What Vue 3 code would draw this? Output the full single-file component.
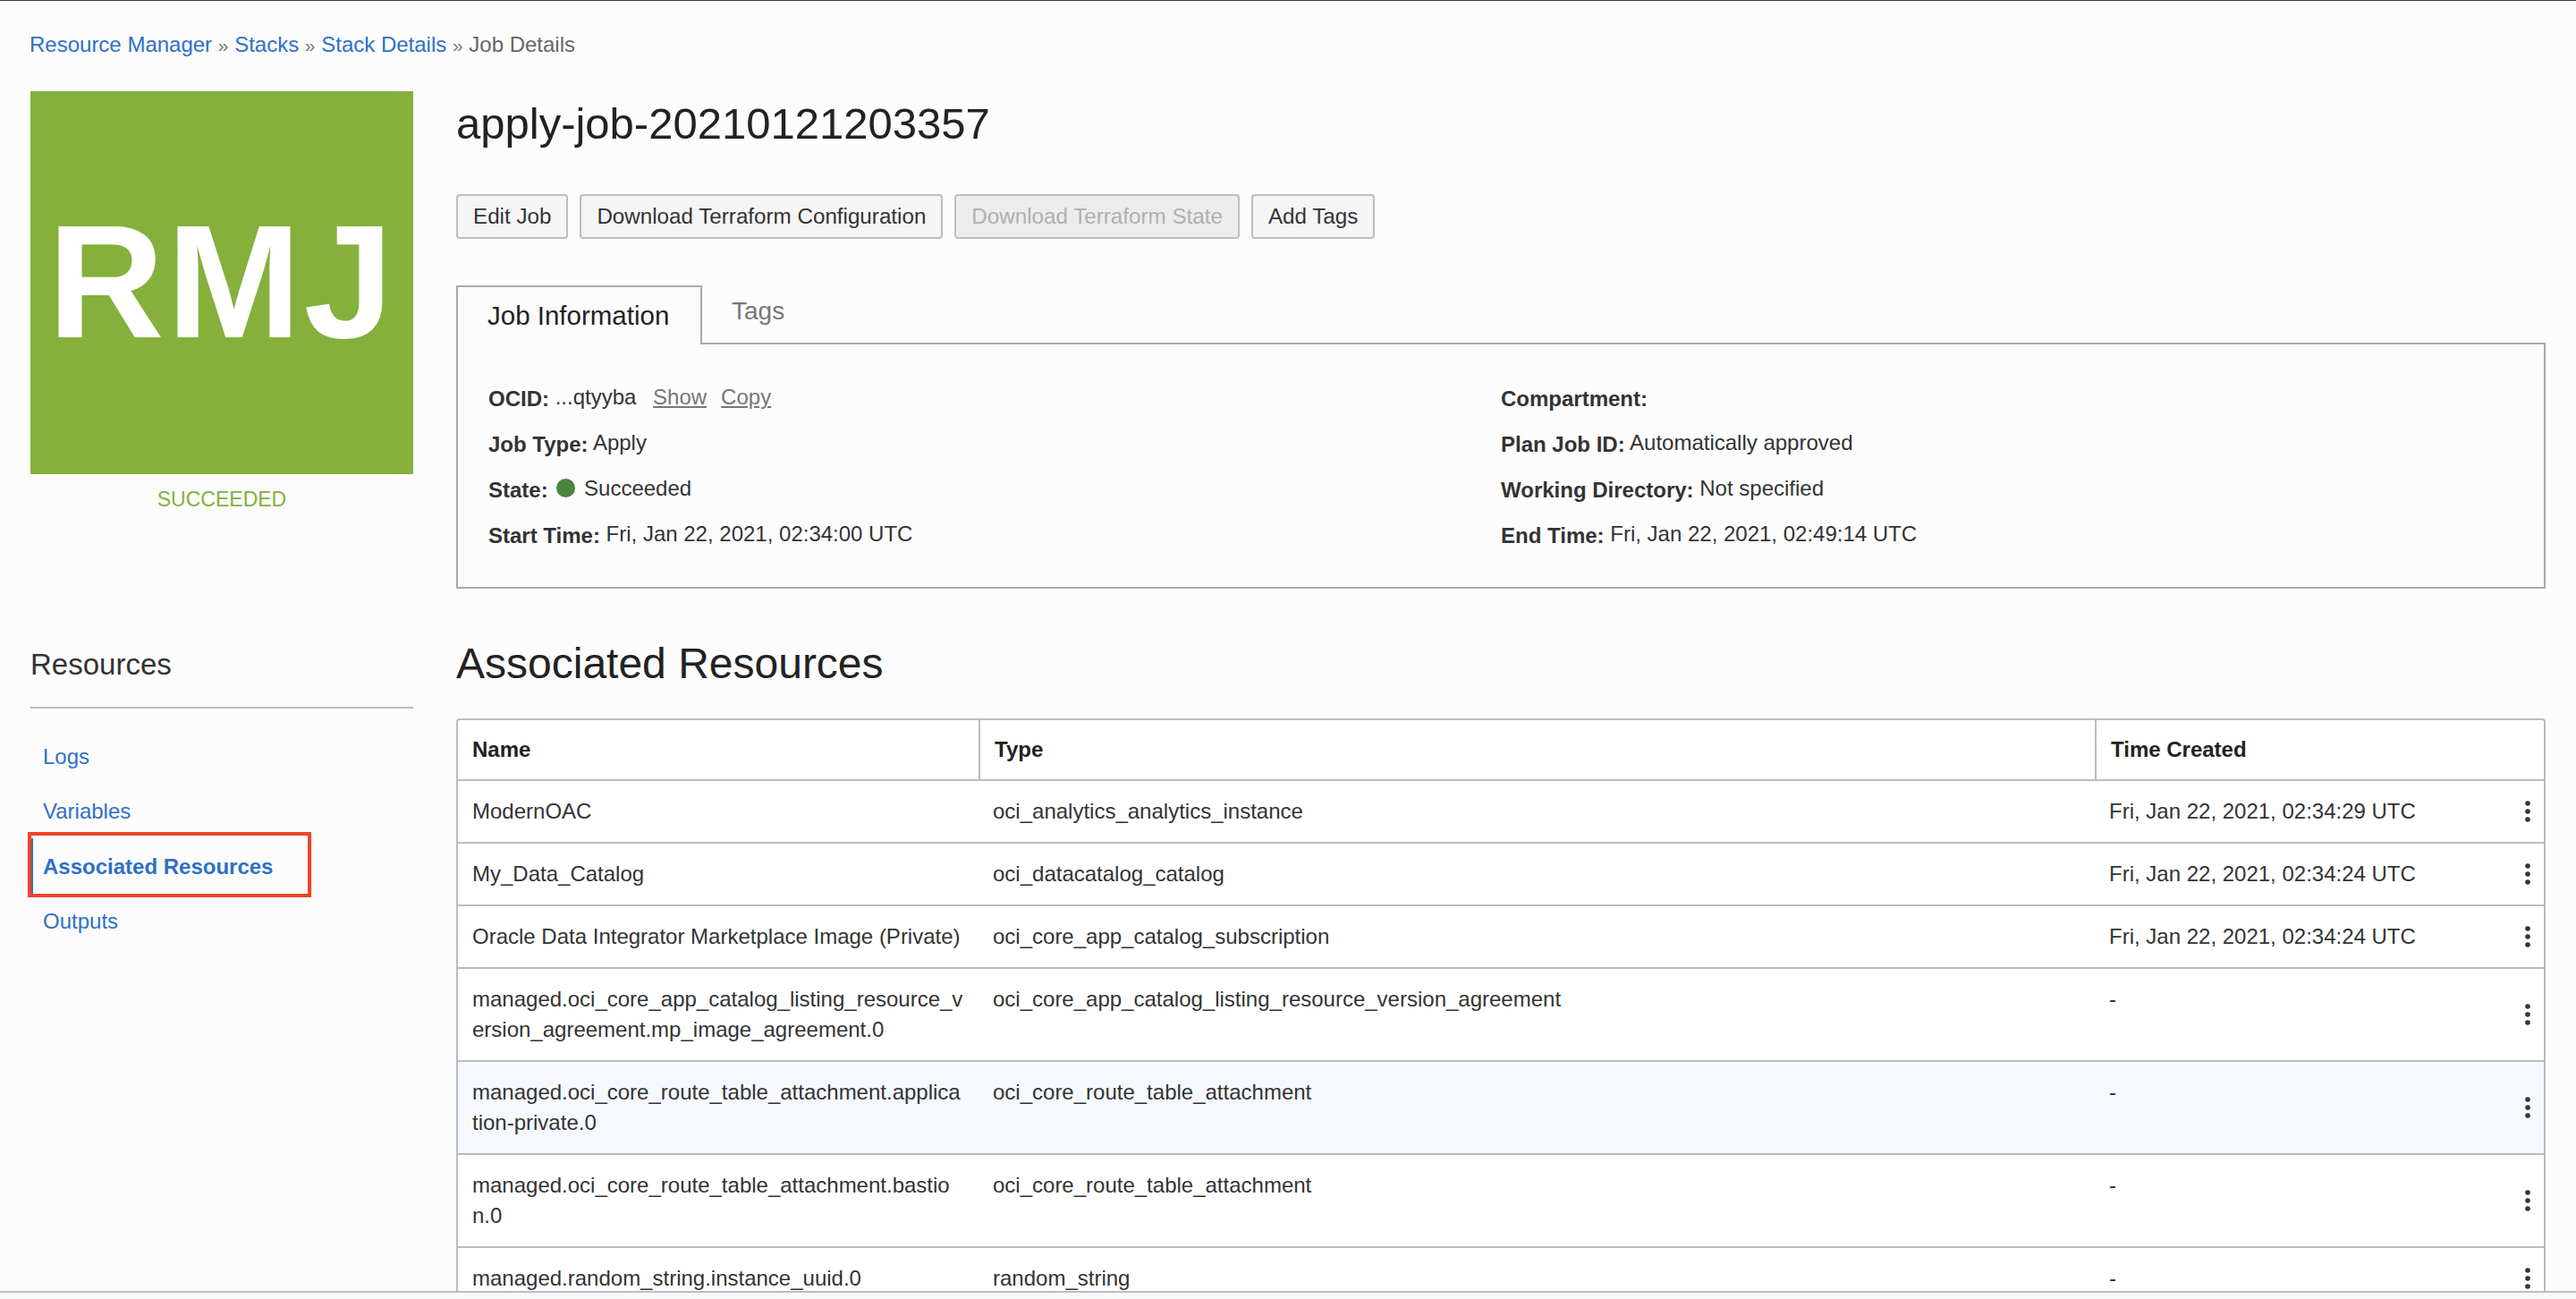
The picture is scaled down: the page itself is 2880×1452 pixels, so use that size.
<template>
  <div class="page">
    <div class="crumbs">
      <a>Resource Manager</a> <span class="sep">»</span> <a>Stacks</a> <span class="sep">»</span> <a>Stack Details</a> <span class="sep">»</span> <span class="current">Job Details</span>
    </div>

    <div class="layout">
      <aside class="side">
        <div class="logo">RMJ</div>
        <div class="status">SUCCEEDED</div>
        <h3 class="res-title">Resources</h3>
        <nav class="res-nav">
          <a v-for="item in navItems" :key="item" :class="{ active: item === 'Associated Resources' }">{{ item }}</a>
        </nav>
      </aside>

      <main class="content">
        <h1 class="job-title">apply-job-20210121203357</h1>
        <div class="actions">
          <button>Edit Job</button>
          <button>Download Terraform Configuration</button>
          <button class="disabled">Download Terraform State</button>
          <button>Add Tags</button>
        </div>

        <div class="tabs">
          <div class="tab selected">Job Information</div>
          <div class="tab">Tags</div>
        </div>
        <div class="info">
          <div class="info-col">
            <div class="line"><b>OCID:</b> ...qtyyba <u class="lnk first">Show</u><u class="lnk">Copy</u></div>
            <div class="line"><b>Job Type:</b> Apply</div>
            <div class="line"><b>State:</b> <i class="dot"></i> Succeeded</div>
            <div class="line"><b>Start Time:</b> Fri, Jan 22, 2021, 02:34:00 UTC</div>
          </div>
          <div class="info-col">
            <div class="line"><b>Compartment:</b></div>
            <div class="line"><b>Plan Job ID:</b> Automatically approved</div>
            <div class="line"><b>Working Directory:</b> Not specified</div>
            <div class="line"><b>End Time:</b> Fri, Jan 22, 2021, 02:49:14 UTC</div>
          </div>
        </div>

        <h2 class="sec-title">Associated Resources</h2>
        <div class="table">
          <div class="row head">
            <div class="cell">Name</div>
            <div class="cell">Type</div>
            <div class="cell">Time Created</div>
          </div>
          <div v-for="r in rows" :key="r.name" class="row" :class="{ hover: r.hover }">
            <div class="cell">{{ r.name }}</div>
            <div class="cell">{{ r.type }}</div>
            <div class="cell">{{ r.time }}</div>
            <svg class="kebab" width="8" height="24" viewBox="0 0 8 24">
              <circle cx="4" cy="3" r="2.8" />
              <circle cx="4" cy="12" r="2.8" />
              <circle cx="4" cy="21" r="2.8" />
            </svg>
          </div>
        </div>
      </main>
    </div>
  </div>
</template>

<script setup>
const navItems = ['Logs', 'Variables', 'Associated Resources', 'Outputs']

const rows = [
  { name: 'ModernOAC', type: 'oci_analytics_analytics_instance', time: 'Fri, Jan 22, 2021, 02:34:29 UTC' },
  { name: 'My_Data_Catalog', type: 'oci_datacatalog_catalog', time: 'Fri, Jan 22, 2021, 02:34:24 UTC' },
  { name: 'Oracle Data Integrator Marketplace Image (Private)', type: 'oci_core_app_catalog_subscription', time: 'Fri, Jan 22, 2021, 02:34:24 UTC' },
  { name: 'managed.oci_core_app_catalog_listing_resource_version_agreement.mp_image_agreement.0', type: 'oci_core_app_catalog_listing_resource_version_agreement', time: '-' },
  { name: 'managed.oci_core_route_table_attachment.application-private.0', type: 'oci_core_route_table_attachment', time: '-', hover: true },
  // the wrap falls one letter earlier in the original font
  { name: 'managed.oci_core_route_table_attachment.bastio\nn.0', type: 'oci_core_route_table_attachment', time: '-' },
  { name: 'managed.random_string.instance_uuid.0', type: 'random_string', time: '-' },
]
</script>

<style>
html, body {
  margin: 0;
  background: #f8f9f9;
}
</style>

<style scoped>
.page {
  height: 1445px;
  overflow: hidden;
  box-sizing: border-box;
  background: #fcfcfc;
  border-top: 1px solid #2b3a42;
  border-bottom: 2px solid #b9bdc2;
  font-family: "Liberation Sans", Arial, sans-serif;
  font-size: 24px;
  color: #333;
}
.crumbs {
  padding: 35px 0 0 33px;
  height: 101px;
  box-sizing: border-box;
  line-height: 28px;
  color: #666;
}
.crumbs a {
  color: #2e70c8;
}
.sep {
  font-size: 21px;
  color: #777;
}
.layout {
  display: flex;
  padding: 0 34px;
}
.side {
  width: 428px;
  margin-right: 48px;
  flex: none;
}
.logo {
  height: 428px;
  background: #85b03c;
  color: #fff;
  font-weight: 700;
  font-size: 180px;
  line-height: 426px;
  letter-spacing: 3px;
  text-align: center;
}
.status {
  margin-top: 14px;
  text-align: center;
  color: #85b03c;
  font-size: 23px;
  line-height: 28px;
}
.res-title {
  margin: 151px 0 0;
  font-weight: 400;
  font-size: 33px;
  line-height: 40px;
  color: #333;
  padding-bottom: 27px;
  border-bottom: 2px solid #b9bdc2;
}
.res-nav {
  display: flex;
  flex-direction: column;
  padding: 22px 0 0 1px;
}
.res-nav a {
  position: relative;
  display: flex;
  align-items: center;
  box-sizing: border-box;
  height: 61.5px;
  padding: 2px 0 0 11px;
  border-left: 2px solid transparent;
  color: #2e70c8;
}
.res-nav a.active {
  font-weight: 700;
  border-left-color: #2e70c8;
}
/* red annotation box drawn over the screenshot */
.res-nav a.active::after {
  content: "";
  position: absolute;
  left: -6px;
  top: -7px;
  width: 317px;
  height: 73px;
  box-sizing: border-box;
  border: 4px solid #ee4427;
}
.content {
  flex: 1;
  min-width: 0;
}
.job-title {
  margin: 8px 0 0;
  font-weight: 400;
  font-size: 49px;
  line-height: 56px;
  color: #222;
}
.actions {
  display: flex;
  gap: 13px;
  margin-top: 51px;
}
.actions button {
  height: 50px;
  padding: 0 17px;
  font: inherit;
  font-size: 24.2px;
  color: #333;
  background: #f5f5f5;
  border: 2px solid #b9bdc2;
  border-radius: 4px;
}
.actions button.disabled {
  color: #b0b0b0;
  background: #ececec;
  border-color: #bcc0c4;
}
.tabs {
  display: flex;
  margin-top: 52px;
  height: 66px;
}
.tab {
  padding: 0 33px;
  font-size: 28px;
  line-height: 58px;
  color: #777;
  border-bottom: 2px solid #aaa;
  box-sizing: border-box;
}
.tab.selected {
  width: 275px;
  padding: 4px 0 0 33px;
  font-size: 29.5px;
  line-height: 56px;
  color: #222;
  border: 2px solid #aaa;
  border-bottom: 0;
}
.tabs::after {
  content: "";
  flex: 1;
  border-bottom: 2px solid #aaa;
}
.info {
  display: flex;
  height: 273px;
  box-sizing: border-box;
  padding: 43px 34px 0;
  border: 2px solid #aaa;
  border-top: 0;
}
.info-col {
  flex: 0 0 1132px;
}
.line {
  height: 51px;
  line-height: 32px;
}
.line b {
  vertical-align: -2px;
}
.lnk {
  color: #777;
  margin-right: 16px;
}
.lnk.first {
  margin-left: 12px;
}
.dot {
  display: inline-block;
  width: 21px;
  height: 21px;
  margin: 0 3px;
  border-radius: 50%;
  background: #4a8540;
  vertical-align: -2px;
}
.sec-title {
  margin: 54px 0 0;
  font-weight: 400;
  font-size: 48px;
  line-height: 60px;
  color: #222;
}
.table {
  margin-top: 31px;
  background: #fff;
  border: 2px solid #b9bdc2;
  border-bottom: 0;
  border-radius: 4px 4px 0 0;
}
.row {
  position: relative;
  display: grid;
  grid-template-columns: 582px 1248px 1fr;
  border-bottom: 2px solid #b9bdc2;
}
.row.hover {
  background: #f5f8fe;
}
.cell {
  padding: 17px 16px;
  line-height: 34px;
  overflow-wrap: anywhere;
  white-space: pre-line;
  box-sizing: border-box;
}
.head .cell {
  padding: 16px;
  font-weight: 700;
  color: #222;
}
.head .cell + .cell {
  border-left: 2px solid #b9bdc2;
}
.kebab {
  position: absolute;
  right: 14px;
  top: 50%;
  transform: translateY(-50%);
  fill: #333;
}
</style>
